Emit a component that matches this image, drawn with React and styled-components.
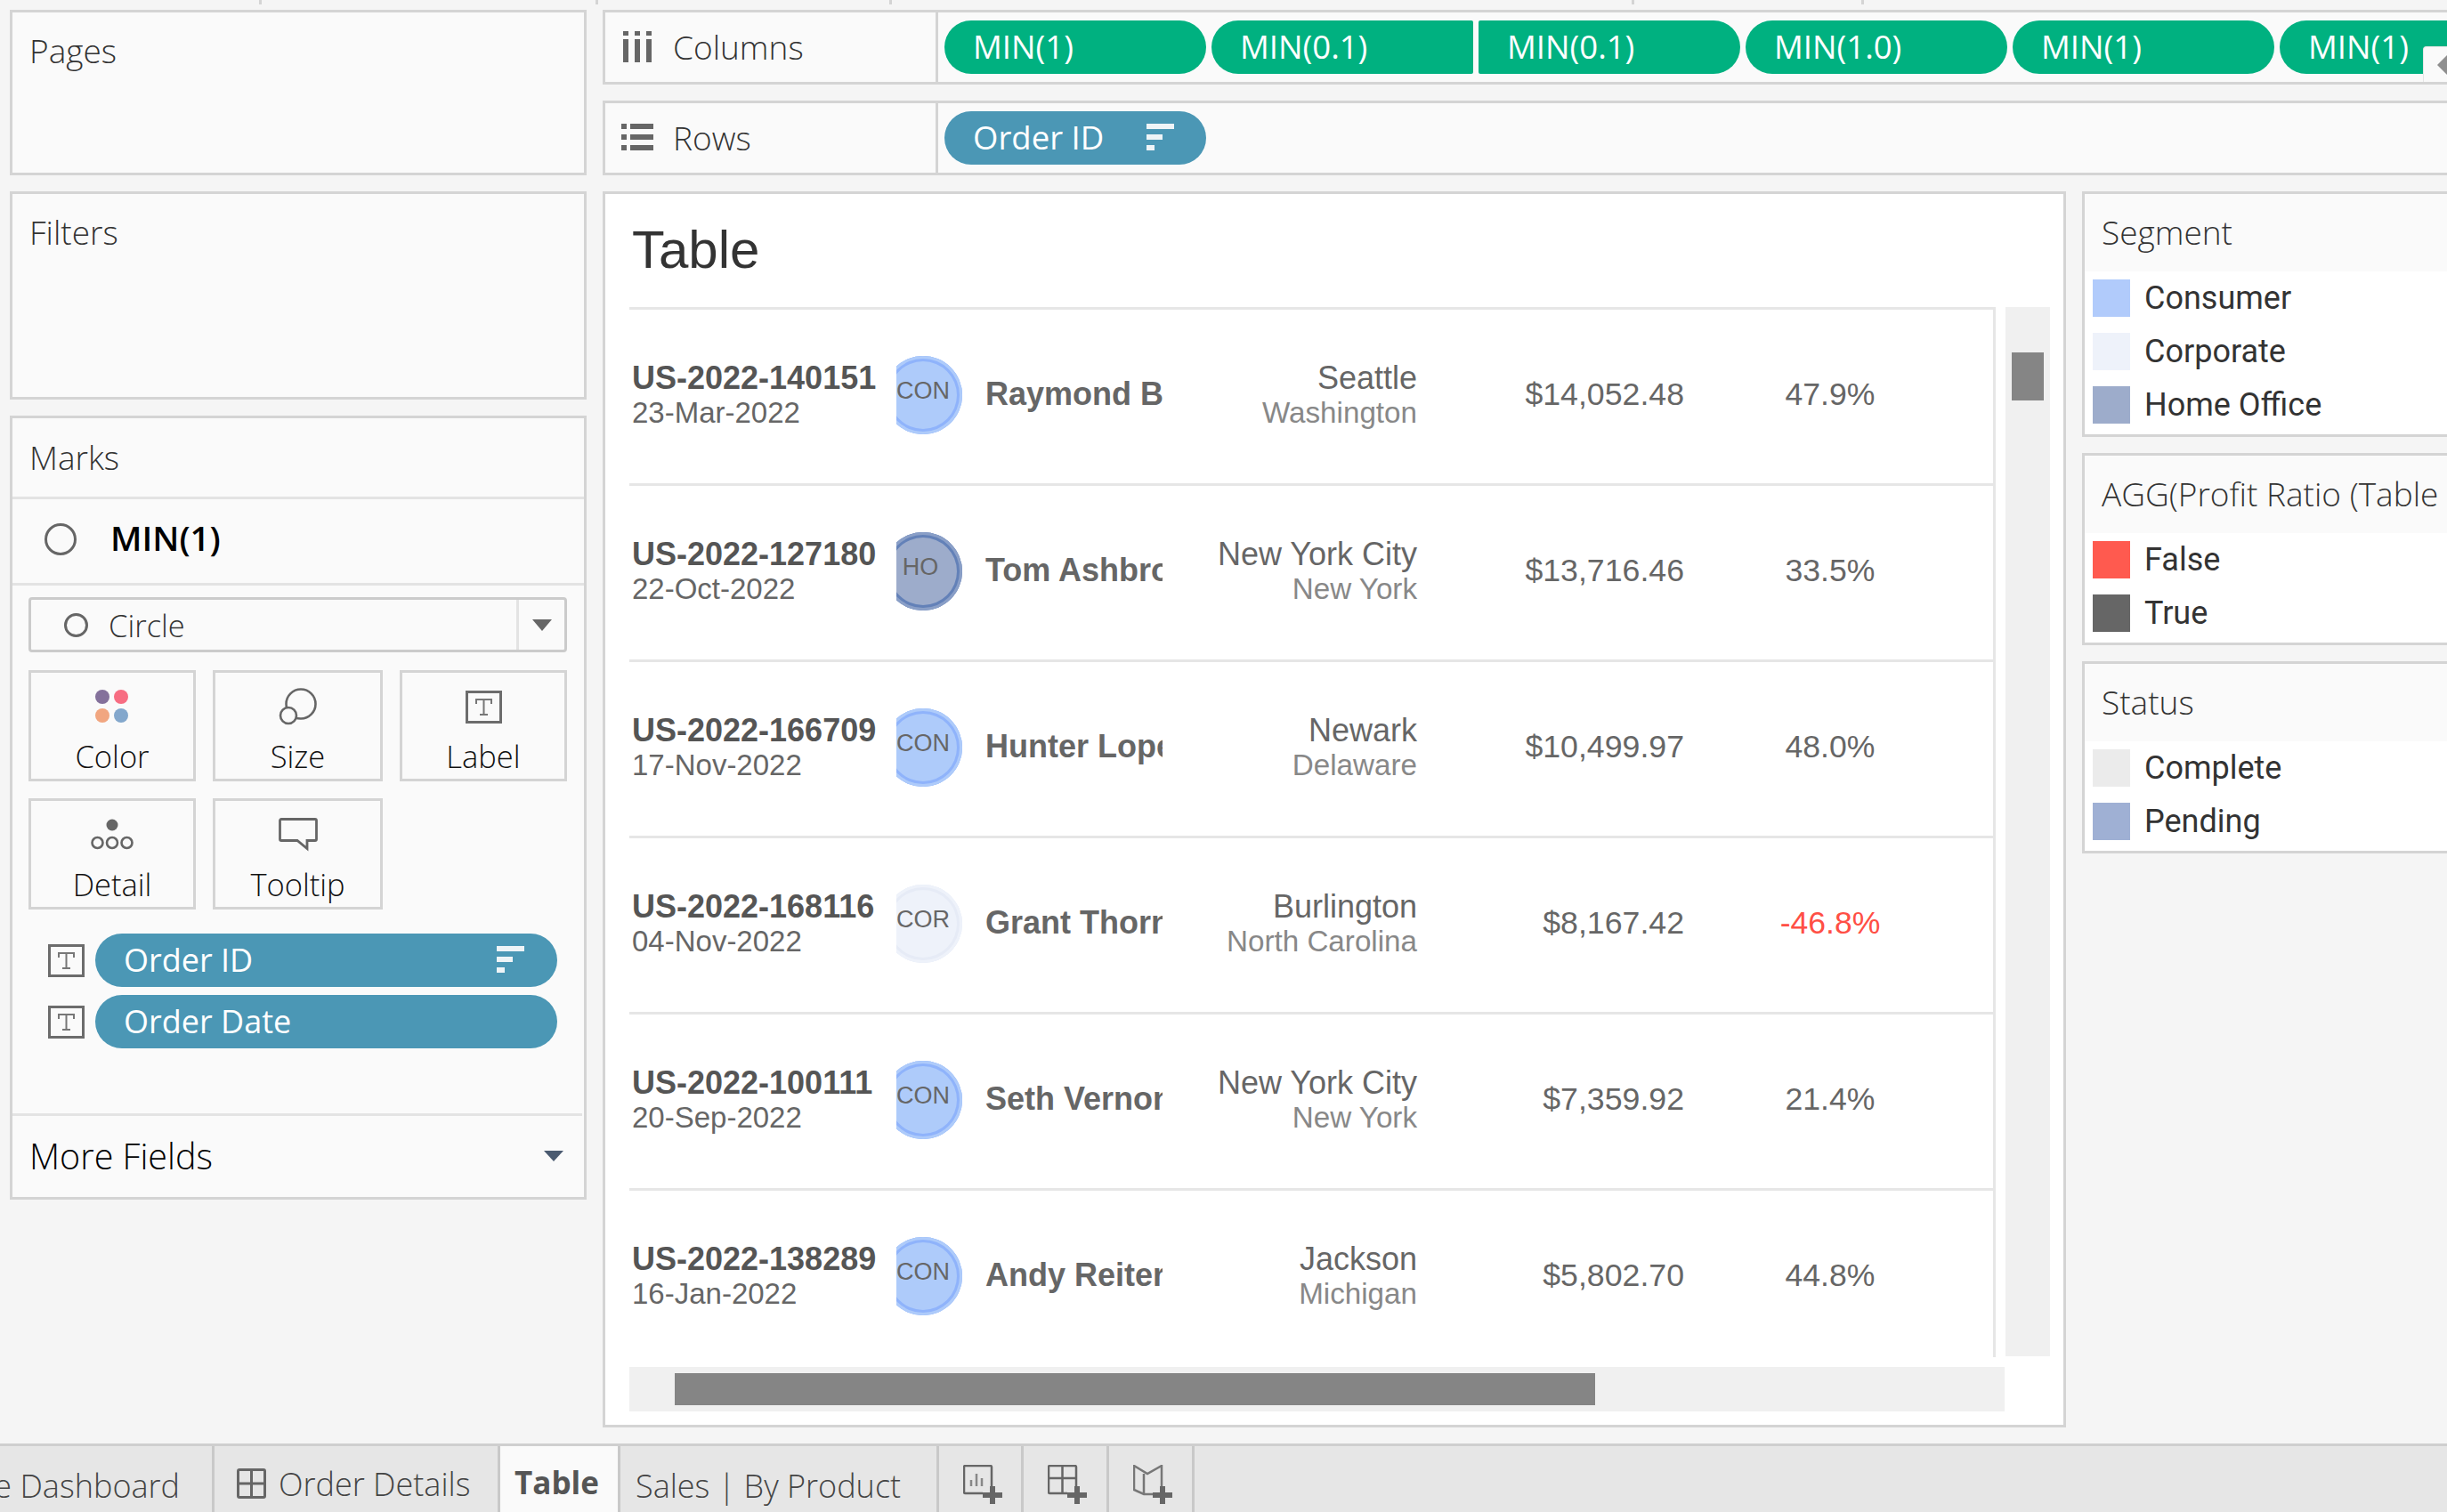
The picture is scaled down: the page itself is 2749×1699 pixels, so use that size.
import React from "react";
import styled, { createGlobalStyle } from "styled-components";

const GlobalStyle = createGlobalStyle`
  html, body {
    margin: 0;
    padding: 0;
    background: #f5f5f5;
  }
  * {
    box-sizing: border-box;
  }
`;

const UI_FONT = `"Open Sans", Roboto, "Liberation Sans", sans-serif`;
const LEGEND_FONT = `Roboto, "Liberation Sans", sans-serif`;
const VIZ_FONT = `"Liberation Sans", Arial, sans-serif`;

const Page = styled.div`
  width: 2749px;
  height: 1699px;
  overflow: hidden;
  display: flex;
  flex-direction: column;
  font-family: ${UI_FONT};
  background: #f5f5f5;
  color: #333;
`;

const Ruler = styled.div`
  height: 5px;
  flex: none;
  display: flex;
`;

const Tick = styled.span`
  width: 3px;
  margin-left: ${({ $gap }) => $gap}px;
  background: #d4d4d4;
`;

const Workspace = styled.div`
  flex: 1;
  min-height: 0;
  display: flex;
  gap: 18px;
  padding: 6px 0 0 11px;
`;

const LeftColumn = styled.div`
  width: 648px;
  flex: none;
  display: flex;
  flex-direction: column;
  gap: 18px;
`;

const Panel = styled.div`
  height: ${({ $h }) => $h}px;
  flex: none;
  border: 3px solid #d4d4d4;
  background: #fafafa;
  display: flex;
  flex-direction: column;
`;

const PanelTitle = styled.div`
  font-size: 37px;
  font-weight: 300;
  color: #333;
  padding: ${({ $top }) => $top}px 0 0 19px;
  line-height: 42px;
`;

const MarksHead = styled.div`
  height: 91px;
  flex: none;
  display: flex;
  align-items: center;
  padding: 0 0 2px 19px;
  font-size: 37px;
  font-weight: 300;
  border-bottom: 3px solid #e3e3e3;
`;

const MarksType = styled.div`
  height: 97px;
  flex: none;
  display: flex;
  align-items: center;
  padding: 0 0 5px 36px;
  gap: 38px;
  font-size: 38.5px;
  font-weight: 600;
  color: #000;
  border-bottom: 3px solid #e3e3e3;
`;

const MarksTypeLabel = styled.span`
  margin-top: -4px;
`;

const Ring = styled.span`
  width: ${({ $size }) => $size}px;
  height: ${({ $size }) => $size}px;
  border: 3px solid #666;
  border-radius: 50%;
  flex: none;
`;

const MarksBody = styled.div`
  flex: 1;
  padding: 13px 19px 0 18px;
  display: flex;
  flex-direction: column;
`;

const Select = styled.div`
  height: 62px;
  border: 3px solid #cbcbcb;
  border-radius: 4px;
  display: flex;
  align-items: center;
  padding-left: 37px;
  gap: 23px;
  font-size: 34.5px;
  font-weight: 300;
`;

const SelectLabel = styled.span`
  flex: 1;
`;

const SelectCaret = styled.span`
  width: 54px;
  height: 100%;
  border-left: 3px solid #e3e3e3;
  display: flex;
  align-items: center;
  justify-content: center;
`;

const Caret = styled.span`
  width: 0;
  height: 0;
  border-left: ${({ $w }) => $w}px solid transparent;
  border-right: ${({ $w }) => $w}px solid transparent;
  border-top: ${({ $h }) => $h}px solid ${({ $color }) => $color};
`;

const CardGrid = styled.div`
  margin-top: 20px;
  display: grid;
  grid-template-columns: 188px 191px 188px;
  grid-auto-rows: 125px;
  column-gap: 19px;
  row-gap: 19px;
`;

const Card = styled.div`
  border: 3px solid #d4d4d4;
  display: flex;
  flex-direction: column;
  align-items: center;
  padding-top: 18px;
  font-size: 34.5px;
  font-weight: 300;
  color: #111;
`;

const CardIcon = styled.div`
  height: 40px;
  display: flex;
  align-items: center;
  justify-content: center;
`;

const CardLabel = styled.div`
  margin-top: 16px;
  line-height: 40px;
`;

const FieldRow = styled.div`
  display: flex;
  align-items: center;
  gap: 12px;
  margin-top: ${({ $top }) => $top}px;
  padding-left: 22px;
`;

const FieldPill = styled.div`
  width: 519px;
  height: 60px;
  flex: none;
  border-radius: 30px;
  background: #4b97b5;
  color: #fff;
  font-size: 36px;
  font-weight: 400;
  display: flex;
  align-items: center;
  justify-content: space-between;
  padding: 0 37px 2px 32px;
`;

const MoreFields = styled.div`
  height: 94px;
  flex: none;
  margin-right: 2px;
  border-top: 3px solid #e3e3e3;
  display: flex;
  align-items: center;
  justify-content: space-between;
  padding: 0 21px 2px 19px;
  font-size: 39.5px;
  font-weight: 300;
  color: #000;
`;

const MainColumn = styled.div`
  flex: 1;
  min-width: 0;
  margin-right: -12px;
  display: flex;
  flex-direction: column;
  gap: 18px;
`;

const Shelf = styled.div`
  height: 84px;
  flex: none;
  border: 3px solid #d4d4d4;
  background: #fafafa;
  display: flex;
  position: relative;
  overflow: hidden;
`;

const ShelfLabel = styled.div`
  width: 374px;
  flex: none;
  border-right: 3px solid #d4d4d4;
  display: flex;
  align-items: center;
  gap: 22px;
  padding: 0 0 2px 18px;
  font-size: 37px;
  font-weight: 300;
`;

const ShelfIcon = styled.span`
  width: 36px;
  display: flex;
  justify-content: center;
`;

const ShelfPills = styled.div`
  flex: 1;
  display: flex;
  gap: 6px;
  padding: 9px 0 0 7px;
`;

const Pill = styled.div`
  width: 294px;
  height: 60px;
  flex: none;
  border-radius: ${({ $squareL, $squareR }) =>
    `${$squareL ? 2 : 30}px ${$squareR ? 2 : 30}px ${$squareR ? 2 : 30}px ${$squareL ? 2 : 30}px`};
  background: ${({ $color }) => $color};
  color: #fff;
  font-size: 36.5px;
  display: flex;
  align-items: center;
  justify-content: space-between;
  padding: 0 36px 2px 32px;
`;

const Collapse = styled.div`
  position: absolute;
  right: 9px;
  top: 38px;
  width: 27px;
  height: 40px;
  background: #fafafa;
  border-left: 1px solid #e6e6e6;
  border-top: 1px solid #e6e6e6;
  border-radius: 4px 0 0 0;
  display: flex;
  align-items: center;
  padding-left: 15px;
`;

const CollapseArrow = styled.span`
  width: 0;
  height: 0;
  border-top: 11px solid transparent;
  border-bottom: 11px solid transparent;
  border-right: 11px solid #8f8f8f;
`;

const Stage = styled.div`
  display: flex;
  gap: 18px;
  align-items: flex-start;
`;

const TablePanel = styled.div`
  width: 1644px;
  height: 1389px;
  flex: none;
  border: 3px solid #d4d4d4;
  background: #fff;
  padding-left: 27px;
  display: flex;
  flex-direction: column;
`;

const TableTitle = styled.div`
  height: 127px;
  flex: none;
  padding: 31px 0 0 3px;
  font-family: ${VIZ_FONT};
  font-size: 60px;
  line-height: 64px;
  color: #333;
`;

const TableArea = styled.div`
  display: flex;
  align-items: flex-start;
  gap: 11px;
`;

const Rows = styled.div`
  width: 1535px;
  height: 1180px;
  flex: none;
  overflow: hidden;
  border-right: 3px solid #e6e6e6;
  font-family: ${VIZ_FONT};
`;

const Row = styled.div`
  height: 198px;
  border-top: 3px solid #e6e6e6;
  padding-left: 3px;
  display: grid;
  grid-template-columns: 297px 100px 199px 286px 300px 328px;
  align-items: center;
`;

const Stack = styled.div`
  display: flex;
  flex-direction: column;
  align-items: ${({ $right }) => ($right ? "flex-end" : "flex-start")};
  white-space: nowrap;
  padding-bottom: 3px;
`;

const OrderId = styled.div`
  font-size: 36px;
  font-weight: 700;
  line-height: 39px;
  color: #555;
`;

const OrderDate = styled.div`
  font-size: 33px;
  line-height: 39px;
  color: #666;
`;

const AvatarSlot = styled.div`
  height: 88px;
  overflow: hidden;
  margin-bottom: 4px;
`;

const Avatar = styled.div`
  width: 88px;
  height: 88px;
  margin-left: -14px;
  border-radius: 50%;
  background: ${({ $fill }) => $fill};
  box-shadow: inset 0 0 0 3px ${({ $edge }) => $edge},
    inset 0 0 0 6px ${({ $ring }) => $ring};
  display: flex;
  align-items: center;
  justify-content: center;
  padding: 0 ${({ $shift }) => $shift || 0}px 8px 0;
  font-size: 27px;
  color: #666;
`;

const Customer = styled.div`
  font-size: 36px;
  font-weight: 700;
  color: #666;
  white-space: nowrap;
  overflow: hidden;
  padding-bottom: 6px;
`;

const City = styled.div`
  font-size: 36px;
  line-height: 39px;
  color: #666;
`;

const State = styled.div`
  font-size: 33.2px;
  line-height: 39px;
  color: #888;
`;

const Amount = styled.div`
  font-size: 35.7px;
  color: #666;
  text-align: right;
  padding-bottom: 5px;
`;

const Ratio = styled.div`
  font-size: 35.6px;
  color: ${({ $negative }) => ($negative ? "#ff4f45" : "#666")};
  text-align: center;
  padding-bottom: 5px;
`;

const VerticalTrack = styled.div`
  width: 50px;
  height: 1179px;
  flex: none;
  background: #f0f0f0;
  padding: 51px 7px 0;
`;

const VerticalThumb = styled.div`
  height: 54px;
  background: #858585;
`;

const HorizontalTrack = styled.div`
  width: 1545px;
  height: 50px;
  flex: none;
  margin-top: 11px;
  background: #f0f0f0;
  padding: 7px 0 0 51px;
`;

const HorizontalThumb = styled.div`
  width: 1034px;
  height: 36px;
  background: #858585;
`;

const Legends = styled.div`
  flex: 1;
  min-width: 0;
  display: flex;
  flex-direction: column;
  gap: 18px;
`;

const Legend = styled.div`
  border: 3px solid #d4d4d4;
  background: #fff;
`;

const LegendTitle = styled.div`
  height: 87px;
  background: #fafafa;
  display: flex;
  align-items: center;
  padding: 0 0 3px 19px;
  font-size: 37px;
  font-weight: 300;
  white-space: nowrap;
  overflow: hidden;
`;

const LegendItems = styled.div`
  display: flex;
  flex-direction: column;
  gap: 18px;
  padding: 9px 0 12px 9px;
`;

const LegendItem = styled.div`
  display: flex;
  align-items: center;
  gap: 16px;
  height: 42px;
  font-family: ${LEGEND_FONT};
  font-size: 36px;
  color: #333;
`;

const Swatch = styled.span`
  width: 42px;
  height: 42px;
  flex: none;
  background: ${({ $color }) => $color};
`;

const TabBar = styled.div`
  height: 77px;
  flex: none;
  border-top: 3px solid #cfcfcf;
  background: #e6e6e6;
  display: flex;
`;

const Tab = styled.div`
  width: ${({ $w }) => $w}px;
  flex: none;
  display: flex;
  align-items: center;
  justify-content: ${({ $end }) => ($end ? "flex-end" : "flex-start")};
  gap: 14px;
  padding: ${({ $pad }) => $pad};
  border-right: 3px solid #c9c9c9;
  font-size: 36px;
  font-weight: 300;
  color: #444;
  white-space: nowrap;
  overflow: hidden;
  background: ${({ $active }) => ($active ? "#fafafa" : "transparent")};
  ${({ $active }) => $active && "font-weight: 700; font-size: 35px; color: #555;"}
`;

const IconTab = styled.div`
  width: ${({ $w }) => $w}px;
  flex: none;
  display: flex;
  align-items: center;
  justify-content: center;
  padding: 12px 0 0 5px;
  border-right: 3px solid #c9c9c9;
`;

const SortIcon = () => (
  <svg width="31" height="30" viewBox="0 0 31 30">
    <rect width="31" height="6" fill="#eef4f7" />
    <rect y="12" width="18" height="6" fill="#eef4f7" />
    <rect y="24" width="9" height="6" fill="#eef4f7" />
  </svg>
);

const ColumnsIcon = () => (
  <svg width="32" height="35" viewBox="0 0 32 35" fill="#666">
    <rect x="0" y="0" width="6" height="5" />
    <rect x="13" y="0" width="6" height="5" />
    <rect x="26" y="0" width="6" height="5" />
    <rect x="0" y="9" width="6" height="26" />
    <rect x="13" y="9" width="6" height="26" />
    <rect x="26" y="9" width="6" height="26" />
  </svg>
);

const RowsIcon = () => (
  <svg width="36" height="30" viewBox="0 0 36 30" fill="#666">
    <rect x="0" y="0" width="6" height="6" />
    <rect x="10" y="0" width="26" height="6" />
    <rect x="0" y="12" width="6" height="6" />
    <rect x="10" y="12" width="26" height="6" />
    <rect x="0" y="24" width="6" height="6" />
    <rect x="10" y="24" width="26" height="6" />
  </svg>
);

const ColorIcon = () => (
  <svg width="38" height="38" viewBox="0 0 38 38">
    <ellipse cx="8" cy="8" rx="8" ry="8" fill="#84719b" />
    <ellipse cx="29" cy="8" rx="8" ry="8" fill="#f76d82" />
    <ellipse cx="8" cy="29" rx="8" ry="8" fill="#f1a680" />
    <ellipse cx="29" cy="29" rx="8" ry="8" fill="#83a7cc" />
  </svg>
);

const SizeIcon = () => (
  <svg width="44" height="42" viewBox="0 0 44 42" fill="none" stroke="#666" strokeWidth="2.6">
    <circle cx="25" cy="18" r="16.5" />
    <circle cx="11" cy="31" r="9" fill="#fafafa" />
  </svg>
);

const TextIcon = () => (
  <svg width="41" height="37" viewBox="0 0 41 37" fill="none">
    <rect x="1.5" y="1.5" width="38" height="34" stroke="#6c6c6c" strokeWidth="3" />
    <path d="M12 15v-5h17v5M20.5 10v17M16 27h9" stroke="#777" strokeWidth="2" />
  </svg>
);

const DetailIcon = () => (
  <svg width="48" height="36" viewBox="0 0 48 36" fill="none" stroke="#666" strokeWidth="2.6">
    <circle cx="24" cy="7" r="6.5" fill="#666" stroke="none" />
    <circle cx="7.5" cy="27" r="6" />
    <circle cx="24" cy="27" r="6" />
    <circle cx="40.5" cy="27" r="6" />
  </svg>
);

const TooltipIcon = () => (
  <svg width="44" height="38" viewBox="0 0 44 38" fill="none" stroke="#666" strokeWidth="2.8">
    <path d="M3 1.5h38a1.5 1.5 0 0 1 1.5 1.5v21a1.5 1.5 0 0 1-1.5 1.5h-9v9l-11-9H3A1.5 1.5 0 0 1 1.5 24V3A1.5 1.5 0 0 1 3 1.5z" />
  </svg>
);

const TabGridIcon = () => (
  <svg width="33" height="34" viewBox="0 0 33 34" fill="none" stroke="#666" strokeWidth="3">
    <rect x="1.5" y="1.5" width="30" height="31" rx="1.5" />
    <path d="M16.5 1.5v31M1.5 17h30" />
  </svg>
);

const PLUS = "M30 24h6v7h8v6h-8v7h-6v-7h-8v-6h8z";

const NewSheetIcon = () => (
  <svg width="44" height="44" viewBox="0 0 44 44" fill="none">
    <path d="M22 32H2.5A1.5 1.5 0 0 1 1 30.5V2.5A1.5 1.5 0 0 1 2.5 1h28A1.5 1.5 0 0 1 32 2.5V24" stroke="#666" strokeWidth="2.5" />
    <path d="M9 24v-7M15 24V10M21 24v-9" stroke="#888" strokeWidth="2.5" />
    <path d={PLUS} fill="#666" />
  </svg>
);

const NewDashIcon = () => (
  <svg width="44" height="44" viewBox="0 0 44 44" fill="none">
    <path d="M22 32H2.5A1.5 1.5 0 0 1 1 30.5V2.5A1.5 1.5 0 0 1 2.5 1h28A1.5 1.5 0 0 1 32 2.5V24" stroke="#666" strokeWidth="2.5" />
    <path d="M16.5 1v31M1 15h31" stroke="#666" strokeWidth="2.5" />
    <path d={PLUS} fill="#666" />
  </svg>
);

const NewStoryIcon = () => (
  <svg width="44" height="44" viewBox="0 0 44 44" fill="none">
    <path d="M32 24V1l-16 9L1 1v27l11 5h10M12 10v23" stroke="#777" strokeWidth="2.5" />
    <path d={PLUS} fill="#666" />
  </svg>
);

const CON = { $fill: "#aecbfa", $edge: "#aecbfa", $ring: "#8fb3fb", label: "CON" };
const HO = { $fill: "#9daccb", $edge: "#8a9fc7", $ring: "#6381b8", label: "HO", $shift: 6 };
const COR = { $fill: "#eef2fa", $edge: "#eef2fa", $ring: "#e6ebf6", label: "COR" };

const orders = [
  ["US-2022-140151", "23-Mar-2022", CON, "Raymond Buch", "Seattle", "Washington", "$14,052.48", "47.9%"],
  ["US-2022-127180", "22-Oct-2022", HO, "Tom Ashbrook", "New York City", "New York", "$13,716.46", "33.5%"],
  ["US-2022-166709", "17-Nov-2022", CON, "Hunter Lopez", "Newark", "Delaware", "$10,499.97", "48.0%"],
  ["US-2022-168116", "04-Nov-2022", COR, "Grant Thornton", "Burlington", "North Carolina", "$8,167.42", "-46.8%"],
  ["US-2022-100111", "20-Sep-2022", CON, "Seth Vernon", "New York City", "New York", "$7,359.92", "21.4%"],
  ["US-2022-138289", "16-Jan-2022", CON, "Andy Reiter", "Jackson", "Michigan", "$5,802.70", "44.8%"],
];

const columnPills = [
  { text: "MIN(1)" },
  { text: "MIN(0.1)", $squareR: true },
  { text: "MIN(0.1)", $squareL: true },
  { text: "MIN(1.0)" },
  { text: "MIN(1)" },
  { text: "MIN(1)" },
];

const legends = [
  {
    title: "Segment",
    items: [["Consumer", "#b1cbfb"], ["Corporate", "#eef2fa"], ["Home Office", "#9daccb"]],
  },
  {
    title: "AGG(Profit Ratio (Table Calc))",
    items: [["False", "#ff5a4f"], ["True", "#666666"]],
  },
  {
    title: "Status",
    items: [["Complete", "#ebebeb"], ["Pending", "#9fb0d4"]],
  },
];

const App = () => (
  <Page>
    <GlobalStyle />
    <Ruler>
      <Tick $gap={291} />
      <Tick $gap={375} />
      <Tick $gap={327} />
      <Tick $gap={831} />
      <Tick $gap={255} />
    </Ruler>
    <Workspace>
      <LeftColumn>
        <Panel $h={186}>
          <PanelTitle $top={22}>Pages</PanelTitle>
        </Panel>
        <Panel $h={234}>
          <PanelTitle $top={22}>Filters</PanelTitle>
        </Panel>
        <Panel $h={881}>
          <MarksHead>Marks</MarksHead>
          <MarksType>
            <Ring $size={36} />
            <MarksTypeLabel>MIN(1)</MarksTypeLabel>
          </MarksType>
          <MarksBody>
            <Select>
              <Ring $size={27} />
              <SelectLabel>Circle</SelectLabel>
              <SelectCaret>
                <Caret $w={11} $h={13} $color="#666" />
              </SelectCaret>
            </Select>
            <CardGrid>
              <Card>
                <CardIcon><ColorIcon /></CardIcon>
                <CardLabel>Color</CardLabel>
              </Card>
              <Card>
                <CardIcon><SizeIcon /></CardIcon>
                <CardLabel>Size</CardLabel>
              </Card>
              <Card>
                <CardIcon><TextIcon /></CardIcon>
                <CardLabel>Label</CardLabel>
              </Card>
              <Card>
                <CardIcon><DetailIcon /></CardIcon>
                <CardLabel>Detail</CardLabel>
              </Card>
              <Card>
                <CardIcon><TooltipIcon /></CardIcon>
                <CardLabel>Tooltip</CardLabel>
              </Card>
            </CardGrid>
            <FieldRow $top={27}>
              <TextIcon />
              <FieldPill>
                Order ID
                <SortIcon />
              </FieldPill>
            </FieldRow>
            <FieldRow $top={9}>
              <TextIcon />
              <FieldPill>Order Date</FieldPill>
            </FieldRow>
          </MarksBody>
          <MoreFields>
            More Fields
            <Caret $w={11} $h={12} $color="#4a5a70" />
          </MoreFields>
        </Panel>
      </LeftColumn>
      <MainColumn>
        <Shelf>
          <ShelfLabel>
            <ShelfIcon><ColumnsIcon /></ShelfIcon>
            Columns
          </ShelfLabel>
          <ShelfPills>
            {columnPills.map(({ text, ...rest }, i) => (
              <Pill key={i} $color="#00b180" {...rest}>
                {text}
              </Pill>
            ))}
          </ShelfPills>
          <Collapse>
            <CollapseArrow />
          </Collapse>
        </Shelf>
        <Shelf>
          <ShelfLabel>
            <ShelfIcon><RowsIcon /></ShelfIcon>
            Rows
          </ShelfLabel>
          <ShelfPills>
            <Pill $color="#4b97b5">
              Order ID
              <SortIcon />
            </Pill>
          </ShelfPills>
        </Shelf>
        <Stage>
          <TablePanel>
            <TableTitle>Table</TableTitle>
            <TableArea>
              <Rows>
                {orders.map(([id, date, seg, name, city, state, sales, ratio]) => (
                  <Row key={id}>
                    <Stack>
                      <OrderId>{id}</OrderId>
                      <OrderDate>{date}</OrderDate>
                    </Stack>
                    <AvatarSlot>
                      <Avatar $fill={seg.$fill} $edge={seg.$edge} $ring={seg.$ring} $shift={seg.$shift}>
                        {seg.label}
                      </Avatar>
                    </AvatarSlot>
                    <Customer>{name}</Customer>
                    <Stack $right>
                      <City>{city}</City>
                      <State>{state}</State>
                    </Stack>
                    <Amount>{sales}</Amount>
                    <Ratio $negative={ratio.startsWith("-")}>{ratio}</Ratio>
                  </Row>
                ))}
              </Rows>
              <VerticalTrack>
                <VerticalThumb />
              </VerticalTrack>
            </TableArea>
            <HorizontalTrack>
              <HorizontalThumb />
            </HorizontalTrack>
          </TablePanel>
          <Legends>
            {legends.map((legend) => (
              <Legend key={legend.title}>
                <LegendTitle>{legend.title}</LegendTitle>
                <LegendItems>
                  {legend.items.map(([label, color]) => (
                    <LegendItem key={label}>
                      <Swatch $color={color} />
                      {label}
                    </LegendItem>
                  ))}
                </LegendItems>
              </Legend>
            ))}
          </Legends>
        </Stage>
      </MainColumn>
    </Workspace>
    <TabBar>
      <Tab $w={241} $end $pad="14px 36px 0 0">e Dashboard</Tab>
      <Tab $w={321} $pad="10px 0 0 25px">
        <TabGridIcon />
        Order Details
      </Tab>
      <Tab $w={135} $active $pad="6px 0 0 16px">Table</Tab>
      <Tab $w={358} $pad="14px 0 0 17px">Sales | By Product</Tab>
      <IconTab $w={95}><NewSheetIcon /></IconTab>
      <IconTab $w={96}><NewDashIcon /></IconTab>
      <IconTab $w={96}><NewStoryIcon /></IconTab>
    </TabBar>
  </Page>
);

export default App;
